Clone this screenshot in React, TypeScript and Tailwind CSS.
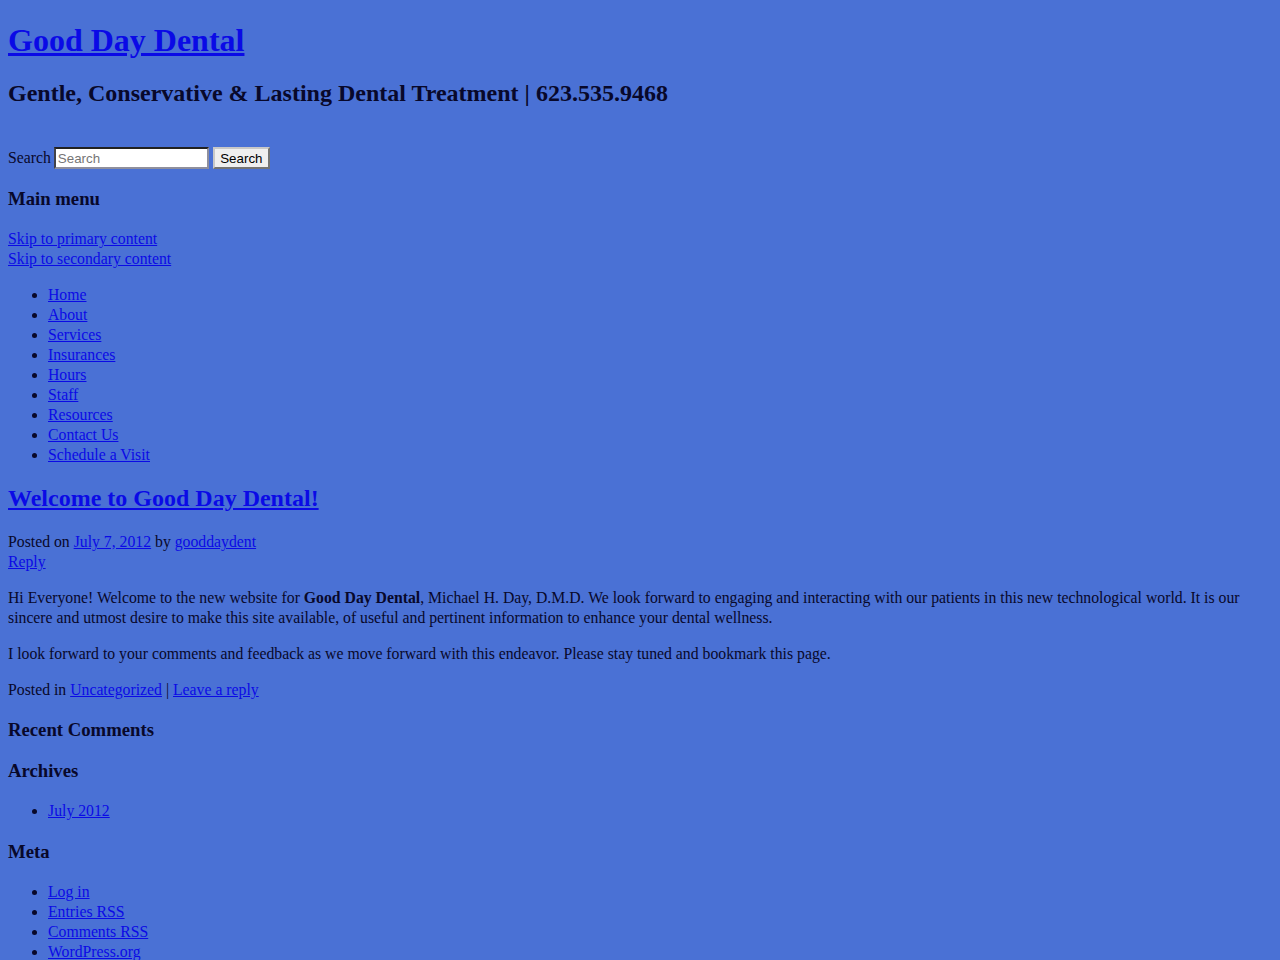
import React from "react";

const link = "text-[#0a0ae6] underline";

export default function App() {
  const menu = ["Home", "About", "Services", "Insurances", "Hours", "Staff", "Resources", "Contact Us", "Schedule a Visit"];
  const meta = ["Log in", "Entries RSS", "Comments RSS", "WordPress.org"];
  return (
    <div className="min-h-[960px] bg-[#4a71d5] px-2 text-[15.75px] leading-[20px] text-[#08082a]" style={{ fontFamily: '"Liberation Serif", "Times New Roman", serif' }}>
      <div className="h-[22px]" />
      <h1 className="text-[32px] font-bold leading-[37px]">
        <a href="#" className={link}>Good Day Dental</a>
      </h1>
      <h2 className="mt-[20px] text-[24px] font-bold leading-[28px]">Gentle, Conservative &amp; Lasting Dental Treatment | 623.535.9468</h2>

      <form className="mt-[40px] flex h-[22px] items-center" onSubmit={(e) => e.preventDefault()}>
        <label className="mr-[3px]">Search</label>
        <input
          placeholder="Search"
          className="h-[22px] w-[155px] border-2 border-[#8f8f9d] border-t-[#767676] bg-white px-[2px] text-[13.33px] text-black placeholder:text-[#757575]"
          style={{ fontFamily: '"Liberation Sans", Arial, sans-serif', borderStyle: "inset" }}
        />
        <button
          type="submit"
          className="ml-[4px] h-[22px] w-[57px] border-2 border-[#c8c8c8] bg-[#efefef] text-[13.33px] text-black"
          style={{ fontFamily: '"Liberation Sans", Arial, sans-serif', borderStyle: "outset" }}
        >
          Search
        </button>
      </form>

      <h3 className="mt-[19px] text-[18.72px] font-bold leading-[21.5px]">Main menu</h3>
      <div className="mt-[19.5px]">
        <div><a href="#" className={link}>Skip to primary content</a></div>
        <div><a href="#" className={link}>Skip to secondary content</a></div>
      </div>

      <ul className="mt-[16px] list-disc pl-[40px]">
        {menu.map((m) => (
          <li key={m}><a href="#" className={link}>{m}</a></li>
        ))}
      </ul>

      <h2 className="mt-[19px] text-[24px] font-bold leading-[28px]">
        <a href="#" className={link}>Welcome to Good Day Dental!</a>
      </h2>
      <div className="mt-[20px]">
        Posted on <a href="#" className={link}>July 7, 2012</a> by <a href="#" className={link}>gooddaydent</a>
      </div>
      <div><a href="#" className={link}>Reply</a></div>

      <p className="mt-[16px]">
        Hi Everyone! Welcome to the new website for <b>Good Day Dental</b>, Michael H. Day, D.M.D. We look forward to engaging and interacting with our patients in this new technological world. It is our sincere and utmost desire to make this site available, of useful and pertinent information to enhance your dental wellness.
      </p>
      <p className="mt-[16px]">I look forward to your comments and feedback as we move forward with this endeavor. Please stay tuned and bookmark this page.</p>
      <div className="mt-[16px]">
        Posted in <a href="#" className={link}>Uncategorized</a> | <a href="#" className={link}>Leave a reply</a>
      </div>

      <h3 className="mt-[18.5px] text-[18.72px] font-bold leading-[21.5px]">Recent Comments</h3>
      <h3 className="mt-[19.5px] text-[18.72px] font-bold leading-[21.5px]">Archives</h3>
      <ul className="mt-[20px] list-disc pl-[40px]">
        <li><a href="#" className={link}>July 2012</a></li>
      </ul>
      <h3 className="mt-[19.5px] text-[18.72px] font-bold leading-[21.5px]">Meta</h3>
      <ul className="mt-[20px] list-disc pl-[40px]">
        {meta.map((m) => (
          <li key={m}><a href="#" className={link}>{m}</a></li>
        ))}
      </ul>
    </div>
  );
}
